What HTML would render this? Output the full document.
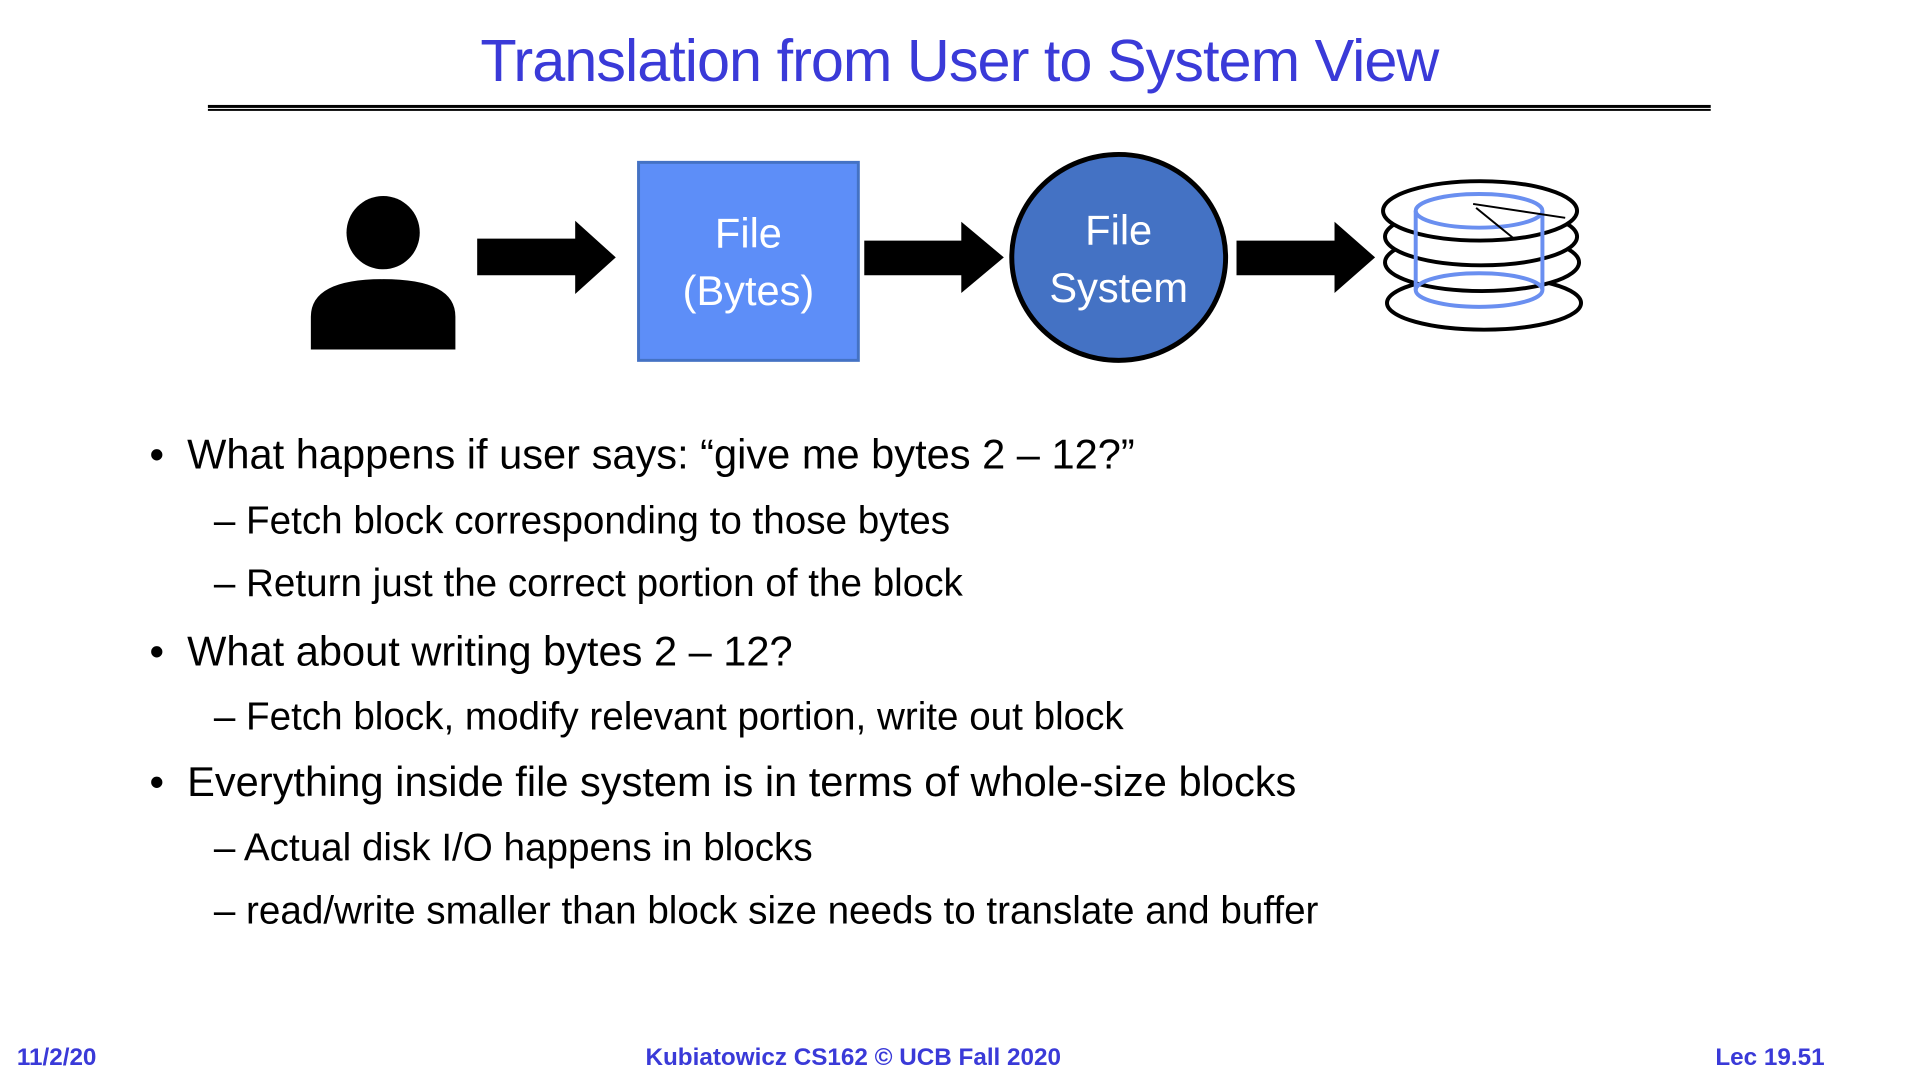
<!DOCTYPE html>
<html><head><meta charset="utf-8"><style>
html,body{margin:0;padding:0;background:#fff;}
body{width:1920px;height:1080px;position:relative;overflow:hidden;font-family:"Liberation Sans",sans-serif;}
#w{position:absolute;left:0;top:0;width:1920px;height:1090px;transform:scale(0.99);transform-origin:0 0;}
.t{position:absolute;white-space:nowrap;}
.title{left:0;width:1938px;text-align:center;top:27px;font-size:60px;color:#3a3ad8;letter-spacing:-1px;}
.m{font-size:42px;color:#000;left:189px;}
.s{font-size:39px;color:#000;left:216px;}
.m:before{content:"•";position:absolute;left:-38px;}
.f{font-size:24.5px;color:#3a3ad8;font-weight:bold;top:1055px;}
</style></head><body><div id="w">
<div class="t title">Translation from User to System View</div>
<div style="position:absolute;left:210px;top:106px;width:1518px;height:3px;background:#000"></div>
<div style="position:absolute;left:210px;top:110px;width:1518px;height:2px;background:#000"></div>
<svg style="position:absolute;left:0;top:0" width="1920" height="420">
<circle cx="387" cy="235" r="37" fill="#000"/>
<path d="M314 353 L314 320 Q314 282 387 282 Q460 282 460 320 L460 353 Z" fill="#000"/>
<polygon points="482,241 581,241 581,223 622,260 581,297 581,278 482,278" fill="#000"/>
<rect x="645" y="164" width="222" height="200" fill="#5d8ef8" stroke="#4472c4" stroke-width="3"/>
<text x="756" y="250" font-size="42" fill="#fff" text-anchor="middle" font-family="Liberation Sans">File</text>
<text x="756" y="308" font-size="42" fill="#fff" text-anchor="middle" font-family="Liberation Sans">(Bytes)</text>
<polygon points="873,243 971,243 971,224 1014,260 971,296 971,278 873,278" fill="#000"/>
<ellipse cx="1130" cy="260" rx="108" ry="104" fill="#4472c4" stroke="#000" stroke-width="5"/>
<text x="1130" y="247" font-size="42" fill="#fff" text-anchor="middle" font-family="Liberation Sans">File</text>
<text x="1130" y="305" font-size="42" fill="#fff" text-anchor="middle" font-family="Liberation Sans">System</text>
<polygon points="1249,243 1348,243 1348,224 1389,260 1348,296 1348,278 1249,278" fill="#000"/>
<g transform="translate(13,3)">
<g fill="none" stroke="#000" stroke-width="4">
<ellipse cx="1486" cy="303" rx="98" ry="27" fill="#fff"/>
<ellipse cx="1484" cy="262" rx="98" ry="29" fill="#fff"/>
<ellipse cx="1483" cy="236" rx="97" ry="29" fill="#fff"/>
<ellipse cx="1482" cy="210" rx="98" ry="30" fill="#fff"/>
</g>
<g fill="none" stroke="#6a8ff0" stroke-width="4">
<ellipse cx="1481" cy="210" rx="64" ry="17"/>
<ellipse cx="1481" cy="290" rx="64" ry="17"/>
<line x1="1417" y1="210" x2="1417" y2="290"/>
<line x1="1545" y1="210" x2="1545" y2="290"/>
</g>
<line x1="1475" y1="203" x2="1568" y2="217" stroke="#000" stroke-width="2"/>
<line x1="1478" y1="207" x2="1515" y2="237" stroke="#000" stroke-width="2"/>
</g>
</svg>
<div class="t m" style="top:435px">What happens if user says: “give me bytes 2 – 12?”</div>
<div class="t s" style="top:505px">– Fetch block corresponding to those bytes</div>
<div class="t s" style="top:568px">– Return just the correct portion of the block</div>
<div class="t m" style="top:634px">What about writing bytes 2 – 12?</div>
<div class="t s" style="top:703px">– Fetch block, modify relevant portion, write out block</div>
<div class="t m" style="top:766px">Everything inside file system is in terms of whole-size blocks</div>
<div class="t s" style="top:835px">– Actual disk I/O happens in blocks</div>
<div class="t s" style="top:899px">– read/write smaller than block size needs to translate and buffer</div>
<div class="t f" style="left:17px">11/2/20</div>
<div class="t f" style="left:652px">Kubiatowicz CS162 © UCB Fall 2020</div>
<div class="t f" style="right:77px">Lec 19.51</div>
</div></body></html>
